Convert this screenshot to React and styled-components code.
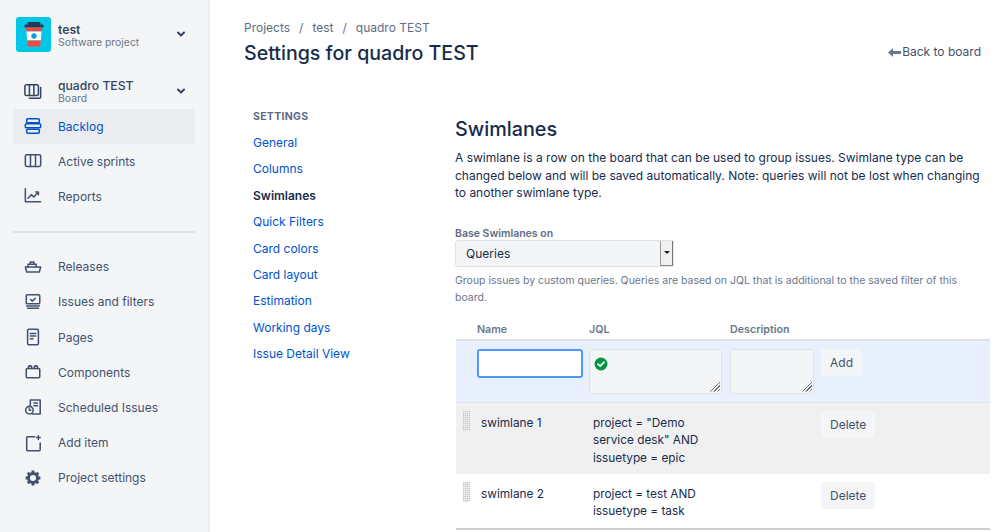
import React from "react";
import styled, { createGlobalStyle } from "styled-components";

const GlobalStyle = createGlobalStyle`
  html, body {
    margin: 0;
    padding: 0;
    background: #fff;
    font-family: Inter, "Liberation Sans", sans-serif;
    color: #172b4d;
    -webkit-font-smoothing: antialiased;
  }
  * { box-sizing: border-box; }
`;

const Page = styled.div`
  display: flex;
  width: 999px;
  height: 532px;
  overflow: hidden;
`;

const Sidebar = styled.nav`
  width: 210px;
  flex: none;
  background: #f4f5f7;
  border-right: 2px solid #ebecf0;
  padding: 17px 13px 0;
`;

const ProjectHead = styled.div`
  display: flex;
  align-items: center;
  height: 35px;
  padding-left: 3px;
  margin-bottom: 23px;
`;

const Avatar = styled.div`
  width: 35px;
  height: 35px;
  border-radius: 3px;
  background: #00c7e6;
  flex: none;
  display: flex;
  align-items: center;
  justify-content: center;
`;

const HeadText = styled.div`
  margin-left: 7px;
  padding-top: 2px;
  flex: 1;
`;

const HeadTitle = styled.div`
  font-size: 12.2px;
  line-height: 13px;
  font-weight: ${(props) => (props.$bold ? 600 : 500)};
  color: #344563;
`;

const HeadSub = styled.div`
  font-size: 10.4px;
  line-height: 13px;
  color: #6b778c;
`;

const Chevron = styled.div`
  width: 12px;
  margin-right: 8px;
  display: flex;
  justify-content: center;
`;

const BoardHead = styled.div`
  display: flex;
  align-items: center;
  height: 33.5px;
  padding-left: 11px;
`;

const BoardGlyph = styled.div`
  width: 18px;
  height: 20px;
  flex: none;
  color: #344563;
  display: flex;
  align-items: center;
  justify-content: center;
`;

const BoardText = styled.div`
  margin-left: 16px;
  flex: 1;
`;

const NavItem = styled.div`
  display: flex;
  align-items: center;
  height: 35.2px;
  padding-left: 11px;
  border-radius: 3px;
  font-size: 12px;
  color: ${(props) => (props.$active ? "#0052cc" : "#42526e")};
  background: ${(props) => (props.$active ? "#ebecf0" : "transparent")};
`;

const NavIcon = styled.div`
  width: 18px;
  height: 20px;
  flex: none;
  margin-right: 16px;
  display: flex;
  align-items: center;
  justify-content: center;
`;

const Divider = styled.div`
  height: 2px;
  background: #dfe1e6;
  margin: 16.5px 0;
`;

const Main = styled.main`
  flex: 1;
  min-width: 0;
  padding: 20px 9px 0 34px;
`;

const Crumbs = styled.div`
  font-size: 12px;
  line-height: 16px;
  color: #5e6c84;
  display: flex;
  gap: 9px;
`;

const TitleRow = styled.div`
  display: flex;
  align-items: flex-start;
  justify-content: space-between;
  margin-top: 4px;
  padding-right: 9px;
`;

const Title = styled.h1`
  margin: 0;
  font-size: 19.6px;
  line-height: 26px;
  font-weight: 500;
  color: #172b4d;
`;

const BackLink = styled.a`
  display: flex;
  align-items: center;
  gap: 1px;
  margin-top: 2px;
  font-size: 12px;
  line-height: 20px;
  color: #42526e;
`;

const Columns = styled.div`
  display: flex;
  margin-top: 42px;
`;

const SettingsNav = styled.div`
  width: 211px;
  flex: none;
  padding: 2px 0 0 9px;
`;

const SettingsHead = styled.div`
  font-size: 10.5px;
  line-height: 14px;
  font-weight: 700;
  letter-spacing: 0.3px;
  color: #5e6c84;
  margin-bottom: 6px;
`;

const SettingsLink = styled.div`
  font-size: 12px;
  line-height: 26.4px;
  color: ${(props) => (props.$active ? "#172b4d" : "#0052cc")};
  font-weight: ${(props) => (props.$active ? 600 : 400)};
`;

const Content = styled.section`
  flex: 1;
  min-width: 0;
`;

const Heading = styled.h2`
  margin: 8px 0 0;
  font-size: 19.8px;
  line-height: 26px;
  font-weight: 500;
  color: #172b4d;
`;

const Intro = styled.p`
  margin: 7px 0 0;
  font-size: 12px;
  line-height: 17.6px;
  color: #172b4d;
`;

const FieldLabel = styled.div`
  margin-top: 25px;
  font-size: 10.5px;
  line-height: 13px;
  font-weight: 600;
  color: #5e6c84;
`;

const SelectBox = styled.div`
  width: 219px;
  height: 27px;
  display: flex;
  align-items: center;
  justify-content: space-between;
  background: #f4f5f7;
  border: 1px solid #dfe1e6;
  border-radius: 3px;
  padding-left: 10px;
  font-size: 12px;
  color: #172b4d;
`;

const SelectArrow = styled.div`
  width: 13px;
  height: 25px;
  background: #f0f0f0;
  border-left: 1px solid #9a9a9a;
  border-right: 1px solid #777;
  border-bottom: 1px solid #888;
  display: flex;
  align-items: center;
  justify-content: center;
  &::after {
    content: "";
    border-left: 3px solid transparent;
    border-right: 3px solid transparent;
    border-top: 3px solid #222;
  }
`;

const HelpText = styled.p`
  margin: 5px 0 0;
  font-size: 10.5px;
  line-height: 17.4px;
  color: #6b778c;
`;

const Table = styled.div`
  margin-top: 13px;
  margin-left: 1px;
`;

const HeadRow = styled.div`
  display: grid;
  grid-template-columns: 112px 141px 91px 1fr;
  height: 21px;
  padding-left: 21px;
  align-items: center;
  font-size: 10.7px;
  font-weight: 600;
  color: #6b778c;
  border-bottom: 2px solid #dfe1e6;
`;

const AddRow = styled.div`
  display: grid;
  grid-template-columns: 112px 141px 91px 1fr;
  align-items: start;
  height: 62px;
  padding: 8px 0 0 21px;
  background: #e9f0fd;
  border-bottom: 1px solid #dfe1e6;
`;

const NameInput = styled.input`
  width: 106px;
  height: 29px;
  padding: 0 6px;
  border: 2px solid #4c9aff;
  border-radius: 3px;
  background: #fff;
  outline: none;
`;

const TextAreaWrap = styled.div`
  position: relative;
  width: ${(props) => props.$width}px;
  height: 45px;
  &::after {
    content: "";
    position: absolute;
    right: 2px;
    bottom: 2px;
    width: 12px;
    height: 12px;
    clip-path: polygon(100% 0, 100% 100%, 0 100%);
    background: repeating-linear-gradient(135deg, #707070 0 1px, transparent 1px 2.4px);
  }
`;

const JqlArea = styled.textarea`
  display: block;
  width: 100%;
  height: 100%;
  background: #f4f5f7;
  border: 1px solid #dfe1e6;
  border-radius: 3px;
  outline: none;
  resize: none;
`;

const ValidBadge = styled.div`
  position: absolute;
  top: 6px;
  left: 5px;
  width: 14px;
  height: 14px;
`;

const DataRow = styled.div`
  display: grid;
  grid-template-columns: 18px 112px 228px 1fr;
  align-items: start;
  height: ${(props) => props.$height}px;
  padding: 8px 0 0 7px;
  background: ${(props) => (props.$shaded ? "#f0f0f0" : "#fff")};
  border-bottom: ${(props) => (props.$last ? "2px solid #d0d0d0" : "none")};
  font-size: 11.8px;
  line-height: 17.7px;
  color: #172b4d;
`;

const DragHandle = styled.div`
  width: 7px;
  height: 20px;
  background-image:
    repeating-linear-gradient(0deg, rgba(255, 255, 255, 0.55) 0 1px, transparent 1px 2px),
    repeating-linear-gradient(90deg, #c4c4c4 0 1px, #e2e2e2 1px 2px);
`;

const RowCell = styled.div`
  padding-top: 4px;
`;

const Jql = styled.div`
  padding-top: 4px;
  width: 130px;
`;

const Button = styled.button`
  height: 27px;
  padding: 0 9px;
  border: none;
  border-radius: 3px;
  background: #f4f5f7;
  color: #42526e;
  font-family: inherit;
  font-size: 12px;
  justify-self: start;
`;

const Stroke = ({ children }) => (
  <svg width="20" height="20" viewBox="0 0 20 20" fill="none" stroke="currentColor" strokeWidth="1.7" strokeLinejoin="round" strokeLinecap="round">
    {children}
  </svg>
);

const CupLogo = () => (
  <svg width="20" height="25" viewBox="0 0 20 25">
    <rect x="3.500" y="0" width="13" height="3" rx="1.500" fill="#253858" />
    <rect x="0.500" y="2.500" width="19" height="3" rx="1" fill="#253858" />
    <path d="M2 5.500h16l-.4 4H2.400z" fill="#ef4b3f" />
    <path d="M2.400 9.500h15.200l-.8 9H3.200z" fill="#fff" />
    <circle cx="10" cy="14" r="2.700" fill="#00a3d9" />
    <path d="M3.200 18.500h13.600l-.7 6H3.900z" fill="#ef4b3f" />
  </svg>
);

const ChevronDown = () => (
  <svg width="10" height="7" viewBox="0 0 10 7" fill="none" stroke="#344563" strokeWidth="2" strokeLinecap="round" strokeLinejoin="round">
    <path d="M2 1.500 5 4.500 8 1.500" />
  </svg>
);

const BoardIcon = () => (
  <Stroke>
    <rect x="1" y="2" width="15" height="12" rx="1.500" />
    <path d="M6 2v12M11 2v12M18.500 5v10.500a1.500 1.500 0 0 1-1.500 1.500H6" />
  </Stroke>
);

const BacklogIcon = () => (
  <Stroke>
    <rect x="3" y="2" width="14" height="4.500" rx="1.200" />
    <rect x="1.500" y="7.500" width="17" height="4.500" rx="1.200" />
    <rect x="3" y="13.500" width="14" height="4.500" rx="1.200" />
  </Stroke>
);

const SprintIcon = () => (
  <Stroke>
    <rect x="1.500" y="3" width="17" height="13" rx="1.500" />
    <path d="M7.200 3v13M12.800 3v13" />
  </Stroke>
);

const ReportsIcon = () => (
  <Stroke>
    <path d="M1.500 2v14.500h17" />
    <path d="M4.500 12.500 8 8.500l3 2.500 4.500-5M13 5.500h3v3" />
  </Stroke>
);

const ReleasesIcon = () => (
  <Stroke>
    <path d="M1.500 10h17l-1.500 5.500H3z" />
    <path d="M4.500 10V7h9v3M7 7V4.500h4V7" />
  </Stroke>
);

const IssuesIcon = () => (
  <Stroke>
    <rect x="2.500" y="2" width="15" height="10" rx="1.200" />
    <path d="M7.500 7.200 9.200 9l3.300-3M3 14.500h14M4 17h12" />
  </Stroke>
);

const PagesIcon = () => (
  <Stroke>
    <rect x="4" y="1.500" width="12" height="17" rx="1.200" />
    <path d="M7 6h6M7 9h6M7 12h3" />
  </Stroke>
);

const ComponentsIcon = () => (
  <Stroke>
    <rect x="2.500" y="6" width="15" height="10.500" rx="1.200" />
    <path d="M5 6V4.200a1 1 0 0 1 1-1h1.500a1 1 0 0 1 1 1V6M11.500 6V4.200a1 1 0 0 1 1-1H14a1 1 0 0 1 1 1V6" />
  </Stroke>
);

const ScheduledIcon = () => (
  <Stroke>
    <path d="M7 8V2.200h11v15.600H9" />
    <path d="M11 5.500h4M11 8.500h4" />
    <circle cx="6" cy="13.500" r="4.200" />
    <path d="M6 11.500v2.200h1.600" />
  </Stroke>
);

const AddItemIcon = () => (
  <Stroke>
    <path d="M12 3H4a1 1 0 0 0-1 1v13.500a1 1 0 0 0 1 1h13a1 1 0 0 0 1-1V10" />
    <path d="M16 2v4M14 4h4" />
  </Stroke>
);

const GearIcon = () => (
  <svg width="20" height="20" viewBox="0 0 20 20" fill="none" stroke="currentColor">
    <circle cx="10" cy="10" r="5" strokeWidth="3.200" />
    {[0, 45, 90, 135].map((deg) => (
      <path key={deg} d="M10 1.800v16.400" strokeWidth="3.200" strokeDasharray="3 10.400" transform={`rotate(${deg} 10 10)`} />
    ))}
  </svg>
);

const BackArrow = () => (
  <svg width="13" height="9" viewBox="0 0 13 9" fill="#6b778c">
    <path d="M0 4.500 5 0v3h8v3H5v3z" />
  </svg>
);

const CheckBadge = () => (
  <svg width="14" height="14" viewBox="0 0 14 14">
    <circle cx="7" cy="7" r="6.500" fill="#00943e" />
    <path d="M4 7.200 6.200 9.200 10 5.200" fill="none" stroke="#fff" strokeWidth="1.800" strokeLinecap="round" strokeLinejoin="round" />
  </svg>
);

const topNav = [
  { label: "Backlog", icon: <BacklogIcon />, active: true },
  { label: "Active sprints", icon: <SprintIcon /> },
  { label: "Reports", icon: <ReportsIcon /> },
];

const bottomNav = [
  { label: "Releases", icon: <ReleasesIcon /> },
  { label: "Issues and filters", icon: <IssuesIcon /> },
  { label: "Pages", icon: <PagesIcon /> },
  { label: "Components", icon: <ComponentsIcon /> },
  { label: "Scheduled Issues", icon: <ScheduledIcon /> },
  { label: "Add item", icon: <AddItemIcon /> },
  { label: "Project settings", icon: <GearIcon /> },
];

const settingsLinks = ["General", "Columns", "Swimlanes", "Quick Filters", "Card colors", "Card layout", "Estimation", "Working days", "Issue Detail View"];

const App = () => {
  return (
    <Page>
      <GlobalStyle />
      <Sidebar>
        <ProjectHead>
          <Avatar><CupLogo /></Avatar>
          <HeadText>
            <HeadTitle $bold>test</HeadTitle>
            <HeadSub>Software project</HeadSub>
          </HeadText>
          <Chevron><ChevronDown /></Chevron>
        </ProjectHead>
        <BoardHead>
          <BoardGlyph><BoardIcon /></BoardGlyph>
          <BoardText>
            <HeadTitle>quadro TEST</HeadTitle>
            <HeadSub>Board</HeadSub>
          </BoardText>
          <Chevron><ChevronDown /></Chevron>
        </BoardHead>
        {topNav.map((item) => (
          <NavItem key={item.label} $active={item.active}>
            <NavIcon>{item.icon}</NavIcon>
            {item.label}
          </NavItem>
        ))}
        <Divider />
        {bottomNav.map((item) => (
          <NavItem key={item.label}>
            <NavIcon>{item.icon}</NavIcon>
            {item.label}
          </NavItem>
        ))}
      </Sidebar>
      <Main>
        <Crumbs>
          <span>Projects</span><span>/</span><span>test</span><span>/</span><span>quadro TEST</span>
        </Crumbs>
        <TitleRow>
          <Title>Settings for quadro TEST</Title>
          <BackLink><BackArrow />Back to board</BackLink>
        </TitleRow>
        <Columns>
          <SettingsNav>
            <SettingsHead>SETTINGS</SettingsHead>
            {settingsLinks.map((link) => (
              <SettingsLink key={link} $active={link === "Swimlanes"}>{link}</SettingsLink>
            ))}
          </SettingsNav>
          <Content>
            <Heading>Swimlanes</Heading>
            <Intro>
              A swimlane is a row on the board that can be used to group issues. Swimlane type can be changed below and will be saved automatically. Note: queries will not be lost when changing to another swimlane type.
            </Intro>
            <FieldLabel>Base Swimlanes on</FieldLabel>
            <SelectBox>Queries<SelectArrow /></SelectBox>
            <HelpText>
              Group issues by custom queries. Queries are based on JQL that is additional to the saved filter of this board.
            </HelpText>
            <Table>
              <HeadRow>
                <span>Name</span><span>JQL</span><span>Description</span>
              </HeadRow>
              <AddRow>
                <NameInput />
                <TextAreaWrap $width={133}>
                  <JqlArea />
                  <ValidBadge><CheckBadge /></ValidBadge>
                </TextAreaWrap>
                <TextAreaWrap $width={84}><JqlArea /></TextAreaWrap>
                <Button>Add</Button>
              </AddRow>
              <DataRow $shaded $height={71}>
                <DragHandle />
                <RowCell>swimlane 1</RowCell>
                <Jql>project = "Demo service desk" AND issuetype = epic</Jql>
                <Button>Delete</Button>
              </DataRow>
              <DataRow $last $height={56}>
                <DragHandle />
                <RowCell>swimlane 2</RowCell>
                <Jql>project = test AND issuetype = task</Jql>
                <Button>Delete</Button>
              </DataRow>
            </Table>
          </Content>
        </Columns>
      </Main>
    </Page>
  );
};

export default App;
